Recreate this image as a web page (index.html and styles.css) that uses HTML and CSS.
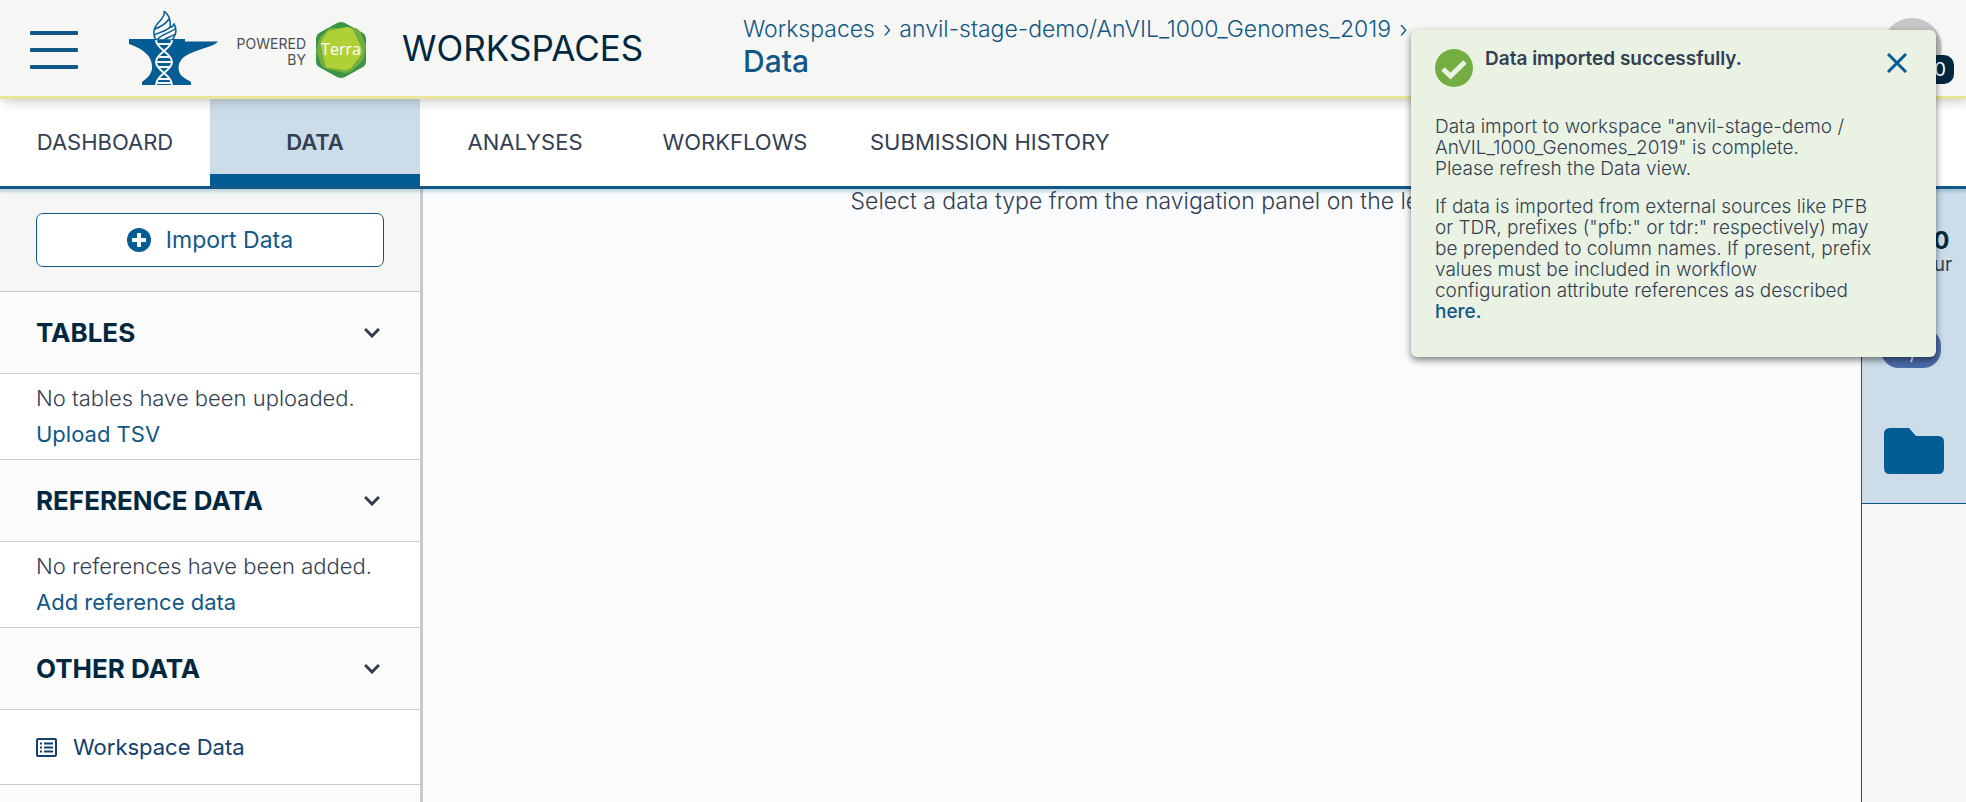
FILE: index.html
```
<!DOCTYPE html>
<html lang="en">
<head>
    <meta charset="UTF-8">
    <meta name="viewport" content="width=device-width, initial-scale=1.0">
    <title>Workspaces - Data</title>
    <link rel="stylesheet" href="styles.css">
</head>
<body>
    <header class="top-bar">
        <button class="menu-button" type="button" aria-label="Menu">
            <svg width="48" height="38" viewBox="0 0 48 38" fill="#125887">
                <rect width="48" height="4" rx="1"/>
                <rect y="17" width="48" height="4" rx="1"/>
                <rect y="34" width="48" height="4" rx="1"/>
            </svg>
        </button>
        <a class="brand" href="#" aria-label="AnVIL powered by Terra">
            <svg class="anvil-logo" width="89" height="74" viewBox="0 0 89 74">
                <path fill="#035c94" d="M0 28H56V30.500H89C86 35 74 37 62 42C52 46 48 53 50 60C51 65 57 68 62 71V74H13V71C18 67 22 64 23 58C24 48 18 39 0 33Z"/>
                <path fill="#f6f7f4" stroke="#035c94" stroke-width="1.500" d="M27 29C23 22 25 16 30 11C34 7 36 4 35 0C40 4 42 9 41 16C42 17 44 15 45 13C48 18 47 24 43 29Z"/>
                <path fill="none" stroke="#035c94" stroke-width="1.500" d="M26 18C31 16 37 13 40 8M25 24C31 21 38 20 41 16M28 29C32 23 41 22 46 18M35 29C38 26 43 26 46 23"/>
                <path fill="none" stroke="#f6f7f4" stroke-width="2" d="M27 29C27 38 43 42 43 51C43 60 27 64 27 74M43 29C43 38 27 42 27 51C27 60 43 64 43 74M29 33H41M29 46H41M27 51H43M29 56H41M30 68H40M28 72H42"/>
            </svg>
            <span class="powered">POWERED<br>BY</span>
            <svg class="terra-logo" width="52" height="56" viewBox="0 0 52 56">
                <path fill="#3c9545" d="M22 1Q26 -1 30 1L48 11Q51 13 51 16V40Q51 43 48 45L30 55Q26 57 22 55L4 45Q1 43 1 40V16Q1 13 4 11Z"/>
                <path fill="#74ae43" d="M15 6L41 6Q45 8 46 11L51 25L48 38L37 49Q34 51 30 51L12 47Q8 46 6 42L1 29L5 15Z"/>
                <path fill="#afd136" d="M13 9L32 5Q36 5 38 8L47 27Q48 30 46 33L36 46Q34 48 30 48L14 46Q11 46 10 42L6 24Q5 21 7 18Z"/>
                <text class="terra-text" x="26" y="33" text-anchor="middle">Terra</text>
            </svg>
        </a>
        <div class="page-title">WORKSPACES</div>
        <div class="crumbs">
            <nav class="crumb-path" aria-label="Breadcrumb">
                <a href="#">Workspaces</a><span>›</span><a href="#">anvil-stage-demo/AnVIL_1000_Genomes_2019</a><span>›</span>
            </nav>
            <h1 class="crumb-current">Data</h1>
        </div>
        <div class="profile">
            <span class="badge">0</span>
        </div>
    </header>

    <nav class="tabs">
        <a class="tab" href="#">DASHBOARD</a>
        <a class="tab tab-active" href="#">DATA</a>
        <a class="tab" href="#">ANALYSES</a>
        <a class="tab" href="#">WORKFLOWS</a>
        <a class="tab" href="#">SUBMISSION HISTORY</a>
    </nav>

    <div class="content">
        <aside class="sidebar">
            <div class="import-box">
                <button class="import-button" type="button">
                    <svg width="24" height="24" viewBox="0 0 24 24">
                        <circle cx="12" cy="12" r="12" fill="#035c94"/>
                        <path d="M12 5V19M5 12H19" stroke="#fff" stroke-width="4"/>
                    </svg>
                    Import Data
                </button>
            </div>

            <button class="section-header" type="button">
                TABLES
                <svg width="16" height="10" viewBox="0 0 16 10"><path d="M1 1L8 8L15 1"/></svg>
            </button>
            <div class="section-body">
                <p>No tables have been uploaded.</p>
                <a href="#">Upload TSV</a>
            </div>

            <button class="section-header" type="button">
                REFERENCE DATA
                <svg width="16" height="10" viewBox="0 0 16 10"><path d="M1 1L8 8L15 1"/></svg>
            </button>
            <div class="section-body">
                <p>No references have been added.</p>
                <a href="#">Add reference data</a>
            </div>

            <button class="section-header" type="button">
                OTHER DATA
                <svg width="16" height="10" viewBox="0 0 16 10"><path d="M1 1L8 8L15 1"/></svg>
            </button>
            <a class="data-item" href="#">
                <svg width="21" height="19" viewBox="0 0 21 19" fill="none" stroke="#11406f" stroke-width="2">
                    <rect x="1" y="1" width="19" height="17" rx="1"/>
                    <path d="M4 5.500H6M4 9.500H6M4 13.500H6M8 5.500H17M8 9.500H17M8 13.500H17"/>
                </svg>
                Workspace Data
            </a>
        </aside>

        <main class="main">Select a data type from the navigation panel on the left</main>

        <aside class="tools">
            <div class="tools-panel">
                <div class="cost">
                    <strong>$0.00</strong>
                    <span>per hour</span>
                </div>
                <button class="env-button" type="button" aria-label="Environment">
                    <svg width="60" height="40" viewBox="0 0 60 40">
                        <rect width="60" height="40" rx="18" fill="#4a6ba8"/>
                        <path d="M34 22L30 34" stroke="#e4eaf4" stroke-width="2"/>
                    </svg>
                </button>
                <button class="files-button" type="button" aria-label="Files">
                    <svg width="60" height="46" viewBox="0 0 60 46">
                        <path fill="#035c94" d="M6 0H25L32 8H54Q60 8 60 14V40Q60 46 54 46H6Q0 46 0 40V6Q0 0 6 0Z"/>
                    </svg>
                </button>
            </div>
        </aside>
    </div>

    <div class="toast" role="status">
        <div class="toast-head">
            <svg width="38" height="38" viewBox="0 0 38 38">
                <circle cx="19" cy="19" r="19" fill="#74ae43"/>
                <path d="M8 20L15.500 27L30 13" fill="none" stroke="#e9f2e3" stroke-width="5"/>
            </svg>
            <div class="toast-title">Data imported successfully.</div>
            <button class="toast-close" type="button" aria-label="Close">
                <svg width="20" height="20" viewBox="0 0 20 20"><path d="M1 1L19 19M19 1L1 19" stroke="#035c94" stroke-width="3"/></svg>
            </button>
        </div>
        <div class="toast-body">
            <p>Data import to workspace "anvil-stage-demo /<br>AnVIL_1000_Genomes_2019" is complete.<br>Please refresh the Data view.</p>
            <p>If data is imported from external sources like PFB<br>or TDR, prefixes ("pfb:" or tdr:" respectively) may<br>be prepended to column names. If present, prefix<br>values must be included in workflow<br>configuration attribute references as described<br><a href="#">here.</a></p>
        </div>
    </div>
</body>
</html>
```
FILE: styles.css
```
* {
    box-sizing: border-box;
}

body {
    margin: 0;
    min-height: 100vh;
    display: flex;
    flex-direction: column;
    font-family: Inter, "Open Sans", sans-serif;
    font-size: 22px;
    color: #333f52;
    background: #fafbfd;
}

button {
    font: inherit;
    border: none;
    background: none;
    padding: 0;
    cursor: pointer;
}

a {
    color: #125887;
    text-decoration: none;
}

p, h1 {
    margin: 0;
}

svg {
    display: block;
    flex-shrink: 0;
}

/* top bar */
.top-bar {
    position: relative;
    z-index: 3;
    display: flex;
    align-items: center;
    height: 99px;
    padding: 0 24px 0 30px;
    background: #f6f7f4;
    border-bottom: 3px solid #e9e59b;
    box-shadow: 3px 0 13px 0 rgba(0, 0, 0, 0.3);
}

.menu-button {
    margin: 4px 51px 0 0;
}

.brand {
    display: flex;
    align-items: center;
    width: 273px;
}

.powered {
    flex: 1;
    font-size: 14px;
    line-height: 16px;
    text-align: right;
    color: #4c4f52;
    padding-top: 8px;
}

.terra-logo {
    margin: 3px 35px 0 9px;
}

.terra-text {
    font-family: "Open Sans", sans-serif;
    font-size: 16px;
    fill: #fff;
}

.page-title {
    width: 341px;
    font-size: 35px;
    color: #012840;
}

.crumbs {
    flex: 1;
    padding-bottom: 2px;
    white-space: nowrap;
}

.crumb-path {
    display: flex;
    gap: 8px;
    font-size: 23px;
    line-height: 28px;
    font-weight: 300;
    color: #125887;
}

.crumb-current {
    font-size: 30px;
    line-height: 36px;
    font-weight: 500;
    color: #125887;
}

.profile {
    position: relative;
    width: 60px;
    height: 60px;
    border-radius: 50%;
    background: #c6c7c6;
}

.badge {
    position: absolute;
    right: -12px;
    bottom: -6px;
    width: 28px;
    border-radius: 10px;
    background: #012840;
    color: #fff;
    font-size: 19px;
    line-height: 29px;
    text-align: center;
}

/* tabs */
.tabs {
    position: relative;
    z-index: 2;
    display: flex;
    height: 90px;
    background: #fff;
    border-bottom: 3px solid #125887;
    box-shadow: 0 2px 5px 0 rgba(137, 214, 255, 0.4), 0 3px 2px 0 rgba(0, 0, 0, 0.12);
}

.tab {
    display: flex;
    align-items: center;
    justify-content: center;
    min-width: 210px;
    padding: 0 30px 2px;
    color: #333f52;
}

.tab-active {
    padding-top: 12px;
    background: #ccdce9;
    border-bottom: 12px solid #035c94;
    font-weight: 600;
}

/* page content */
.content {
    flex: 1;
    display: flex;
}

.sidebar {
    width: 423px;
    border-right: 3px solid #c8c9cb;
}

.import-box {
    padding: 24px 36px;
    background: #f6f7f4;
}

.import-button {
    display: flex;
    align-items: center;
    justify-content: center;
    gap: 15px;
    width: 100%;
    height: 54px;
    border: 1px solid #125887;
    border-radius: 7px;
    background: #fff;
    color: #125887;
    font-size: 23px;
}

.section-header {
    display: flex;
    align-items: center;
    justify-content: space-between;
    width: 100%;
    height: 83px;
    padding: 0 40px 0 36px;
    border: solid #c8cacc;
    border-width: 1px 0;
    background: #fcfcfc;
    color: #012840;
    font-size: 26px;
    font-weight: 700;
}

.section-header path {
    fill: none;
    stroke: #333f52;
    stroke-width: 3;
}

.section-body {
    padding: 6px 36px 7px;
    background: #fff;
    line-height: 36px;
    font-weight: 300;
    white-space: nowrap;
}

.section-body a {
    display: block;
    font-weight: 400;
}

.data-item {
    display: flex;
    align-items: center;
    gap: 16px;
    height: 75px;
    padding: 0 36px;
    border-bottom: 1px solid #c8cacc;
    background: #fff;
    color: #11406f;
}

.main {
    flex: 1;
    font-size: 23px;
    font-weight: 300;
    line-height: 24px;
    text-align: center;
}

.tools {
    width: 105px;
    border-left: 1px solid #125887;
    background: #f6f7f4;
}

.tools-panel {
    display: flex;
    flex-direction: column;
    align-items: center;
    height: 315px;
    padding-top: 40px;
    border-bottom: 1px solid #125887;
    background: #ccdce9;
}

.cost {
    display: flex;
    flex-direction: column;
    align-items: center;
    font-size: 19px;
    line-height: 24px;
}

.cost strong {
    font-size: 24px;
    color: #012840;
}

.env-button {
    margin: 51px 6px 60px 0;
}

/* notification */
.toast {
    position: absolute;
    z-index: 10;
    top: 30px;
    right: 30px;
    width: 525px;
    padding: 19px 29px 18px 24px;
    border-radius: 6px;
    background: #e9f2e3;
    box-shadow: 0 3px 7px 0 rgba(0, 0, 0, 0.5);
}

.toast-head {
    display: flex;
    align-items: flex-start;
    gap: 12px;
    font-size: 19px;
    line-height: 20px;
    font-weight: 600;
}

.toast-title {
    flex: 1;
}

.toast-close {
    margin-top: 4px;
}

.toast-body {
    margin-top: 29px;
    font-size: 19px;
    line-height: 21px;
    font-weight: 300;
    white-space: nowrap;
}

.toast-body p {
    margin-bottom: 17px;
}

.toast-body a {
    font-weight: 500;
}
```
